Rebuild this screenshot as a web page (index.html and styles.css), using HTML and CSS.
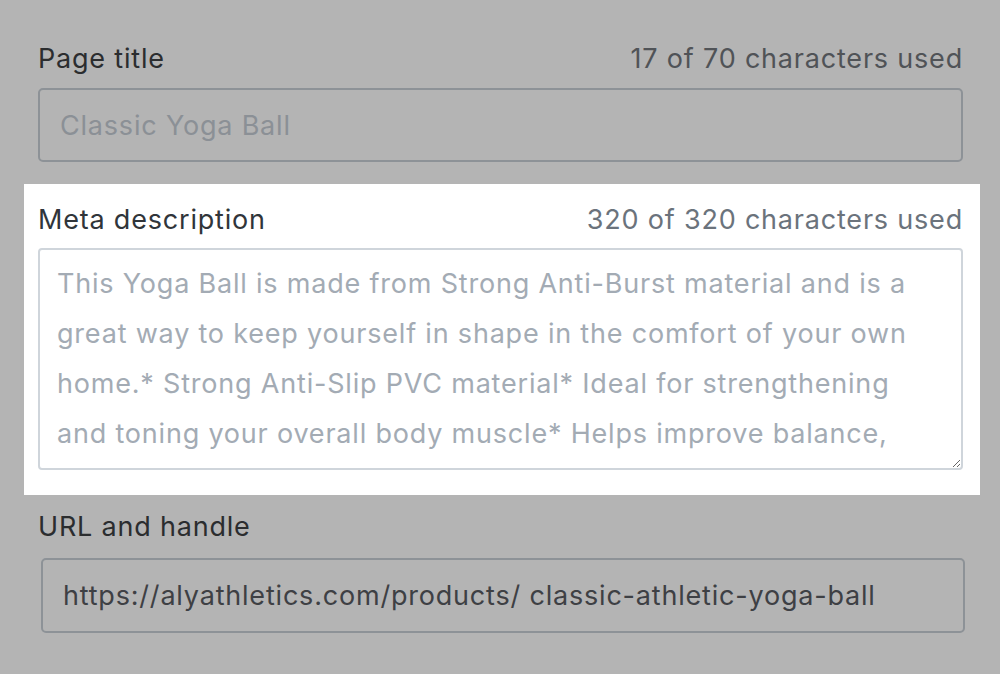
FILE: index.html
```html
<!DOCTYPE html>
<html lang="en">
<head>
    <meta charset="UTF-8">
    <meta name="viewport" content="width=device-width, initial-scale=1.0">
    <title>Search engine listing preview</title>
    <link rel="stylesheet" href="styles.css">
</head>
<body>

    <main class="seo-form">

        <section class="field">
            <div class="field-head">
                <label for="pageTitle">Page title</label>
                <span class="counter">17 of 70 characters used</span>
            </div>
            <input id="pageTitle" class="text-input placeholder" type="text" placeholder="Classic Yoga Ball" readonly>
        </section>

        <section class="field field-focus">
            <div class="field-head">
                <label for="metaDescription">Meta description</label>
                <span class="counter">320 of 320 characters used</span>
            </div>
            <textarea id="metaDescription" class="text-area" readonly>This Yoga Ball is made from Strong Anti-Burst material and is a great way to keep yourself in shape in the comfort of your own home.* Strong Anti-Slip PVC material* Ideal for strengthening and toning your overall body muscle* Helps improve balance, posture and flexibility* Great for yoga, pilates and core workouts at home</textarea>
        </section>

        <section class="field field-url">
            <div class="field-head">
                <label for="urlHandle">URL and handle</label>
            </div>
            <input id="urlHandle" class="text-input" type="text" value="https://alyathletics.com/products/ classic-athletic-yoga-ball" readonly>
        </section>

    </main>

</body>
</html>
```

FILE: styles.css
```css
html, body {
    height: 100%;
}

body {
    margin: 0;
    font-family: 'Inter', 'Noto Sans', sans-serif;
    letter-spacing: 0.8px;
    background: #b4b4b4;
    overflow: hidden;
}

.seo-form {
    width: 956px;
    padding: 44px 0 0 24px;
    display: flex;
    flex-direction: column;
}

.field {
    padding: 0 17px 0 14px;
}

.field-head {
    display: flex;
    justify-content: space-between;
    align-items: baseline;
    height: 30px;
    line-height: 30px;
    font-size: 27px;
    margin-bottom: 14px;
}

.field-head label {
    color: #2b2d2f;
}

.counter {
    color: #505357;
}

.text-input {
    display: block;
    box-sizing: border-box;
    width: 100%;
    height: 74px;
    margin: 0;
    padding: 0 20px;
    font-family: inherit;
    font-size: 27px;
    letter-spacing: inherit;
    color: #3e4044;
    background: #b4b4b4;
    border: 2px solid #8d9297;
    border-radius: 5px;
    outline: none;
}

.text-input::placeholder {
    color: #8b9096;
    opacity: 1;
}

/* highlighted block */
.field-focus {
    margin-top: 22px;
    padding-top: 21px;
    padding-bottom: 25px;
    background: #ffffff;
}

.field-focus .field-head {
    margin-bottom: 13px;
}

.field-focus label {
    color: #30353a;
}

.field-focus .counter {
    color: #6b737c;
}

.text-area {
    display: block;
    box-sizing: border-box;
    width: 100%;
    height: 222px;
    margin: 0;
    padding: 9px 32px 9px 17px;
    font-family: inherit;
    font-size: 27px;
    letter-spacing: inherit;
    line-height: 50px;
    color: #a3abb4;
    background: #ffffff;
    border: 2px solid #cfd5db;
    border-radius: 4px;
    outline: none;
    overflow: hidden;
    resize: vertical;
}

.field-url {
    margin-top: 17px;
    padding-right: 15px;
}

.field-url .field-head {
    margin-bottom: 16px;
}

.field-url .text-input {
    width: calc(100% - 3px);
    height: 75px;
    margin-left: 3px;
}
```
